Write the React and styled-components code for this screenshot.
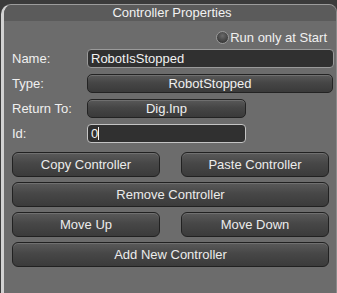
import React from 'react';
import styled, { createGlobalStyle } from 'styled-components';

const GlobalStyle = createGlobalStyle`
  body {
    margin: 0;
    background: #3b3b3b;
    font-family: "Liberation Sans", Arial, sans-serif;
  }
`;

const Panel = styled.div`
  margin: 4px 0 0 1px;
  height: 289px;
  background: #6c6c6c;
  border-left: 3px solid #d2d2d2;
  border-top: 1px solid #9c9c9c;
  border-right: 1px solid #8a8a8a;
  border-top-left-radius: 10px;
  border-top-right-radius: 8px;
  box-sizing: border-box;
  overflow: hidden;
`;

const Header = styled.div`
  height: 16px;
  background: #5b5b5b;
  color: #f2f2f2;
  font-size: 13px;
  line-height: 16px;
  text-align: center;
  padding-left: 4px;
`;

const Body = styled.div`
  padding: 9px 0 0 8px;
  display: flex;
  flex-direction: column;
`;

const CheckRow = styled.label`
  display: flex;
  align-items: center;
  justify-content: flex-end;
  padding-right: 9px;
  height: 14px;
  color: #f0f0f0;
  font-size: 13px;
  gap: 0;
`;

const Radio = styled.span`
  width: 11px;
  height: 11px;
  border-radius: 50%;
  background: radial-gradient(circle at 50% 35%, #6a6a6a, #3c3c3c 70%);
  border: 1px solid #9a9a9a;
  margin-right: 1px;
`;

const Fields = styled.div`
  margin-top: 5px;
  display: grid;
  grid-template-columns: 75px auto;
  row-gap: 6px;
  align-items: center;
`;

const Label = styled.span`
  color: #f0f0f0;
  font-size: 13px;
`;

const Input = styled.div`
  width: ${p => p.$w}px;
  height: 19px;
  box-sizing: border-box;
  background: #303030;
  border: 1px solid ${p => (p.$focus ? '#c4c4c4' : '#9a9a9a')};
  border-radius: 4px;
  color: #f2f2f2;
  font-size: 13px;
  line-height: 17px;
  padding-left: 3px;
  display: flex;
  align-items: center;
`;

const Caret = styled.span`
  display: inline-block;
  width: 1px;
  height: 13px;
  background: #f2f2f2;
`;

const Select = styled.div`
  width: ${p => p.$w}px;
  height: 19px;
  box-sizing: border-box;
  background: linear-gradient(#595959, #464646 45%, #3a3a3a);
  border: 1px solid #232323;
  border-radius: 5px;
  box-shadow: inset 0 1px 0 #6f6f6f;
  color: #f0f0f0;
  font-size: 13px;
  display: flex;
  align-items: center;
  justify-content: center;
`;

const Buttons = styled.div`
  margin-top: 9px;
  display: grid;
  grid-template-columns: 148px 148px;
  column-gap: 21px;
  row-gap: 5px;
  width: 317px;
`;

const Button = styled.div`
  grid-column: ${p => (p.$wide ? '1 / 3' : 'auto')};
  height: 25px;
  box-sizing: border-box;
  background: linear-gradient(#5a5a5a, #474747 45%, #3b3b3b);
  border: 1px solid #212121;
  border-radius: 6px;
  box-shadow: inset 0 1px 0 #707070;
  color: #ececec;
  font-size: 13px;
  display: flex;
  align-items: center;
  justify-content: center;
`;

export default function App() {
  return (
    <>
      <GlobalStyle />
      <Panel>
        <Header>Controller Properties</Header>
        <Body>
          <CheckRow>
            <Radio />
            Run only at Start
          </CheckRow>
          <Fields>
            <Label>Name:</Label>
            <Input $w={247}>RobotIsStopped</Input>
            <Label>Type:</Label>
            <Select $w={246}>RobotStopped</Select>
            <Label>Return To:</Label>
            <Select $w={159}>Dig.Inp</Select>
            <Label>Id:</Label>
            <Input $w={159} $focus>0<Caret /></Input>
          </Fields>
          <Buttons>
            <Button>Copy Controller</Button>
            <Button>Paste Controller</Button>
            <Button $wide>Remove Controller</Button>
            <Button>Move Up</Button>
            <Button>Move Down</Button>
            <Button $wide>Add New Controller</Button>
          </Buttons>
        </Body>
      </Panel>
    </>
  );
}
